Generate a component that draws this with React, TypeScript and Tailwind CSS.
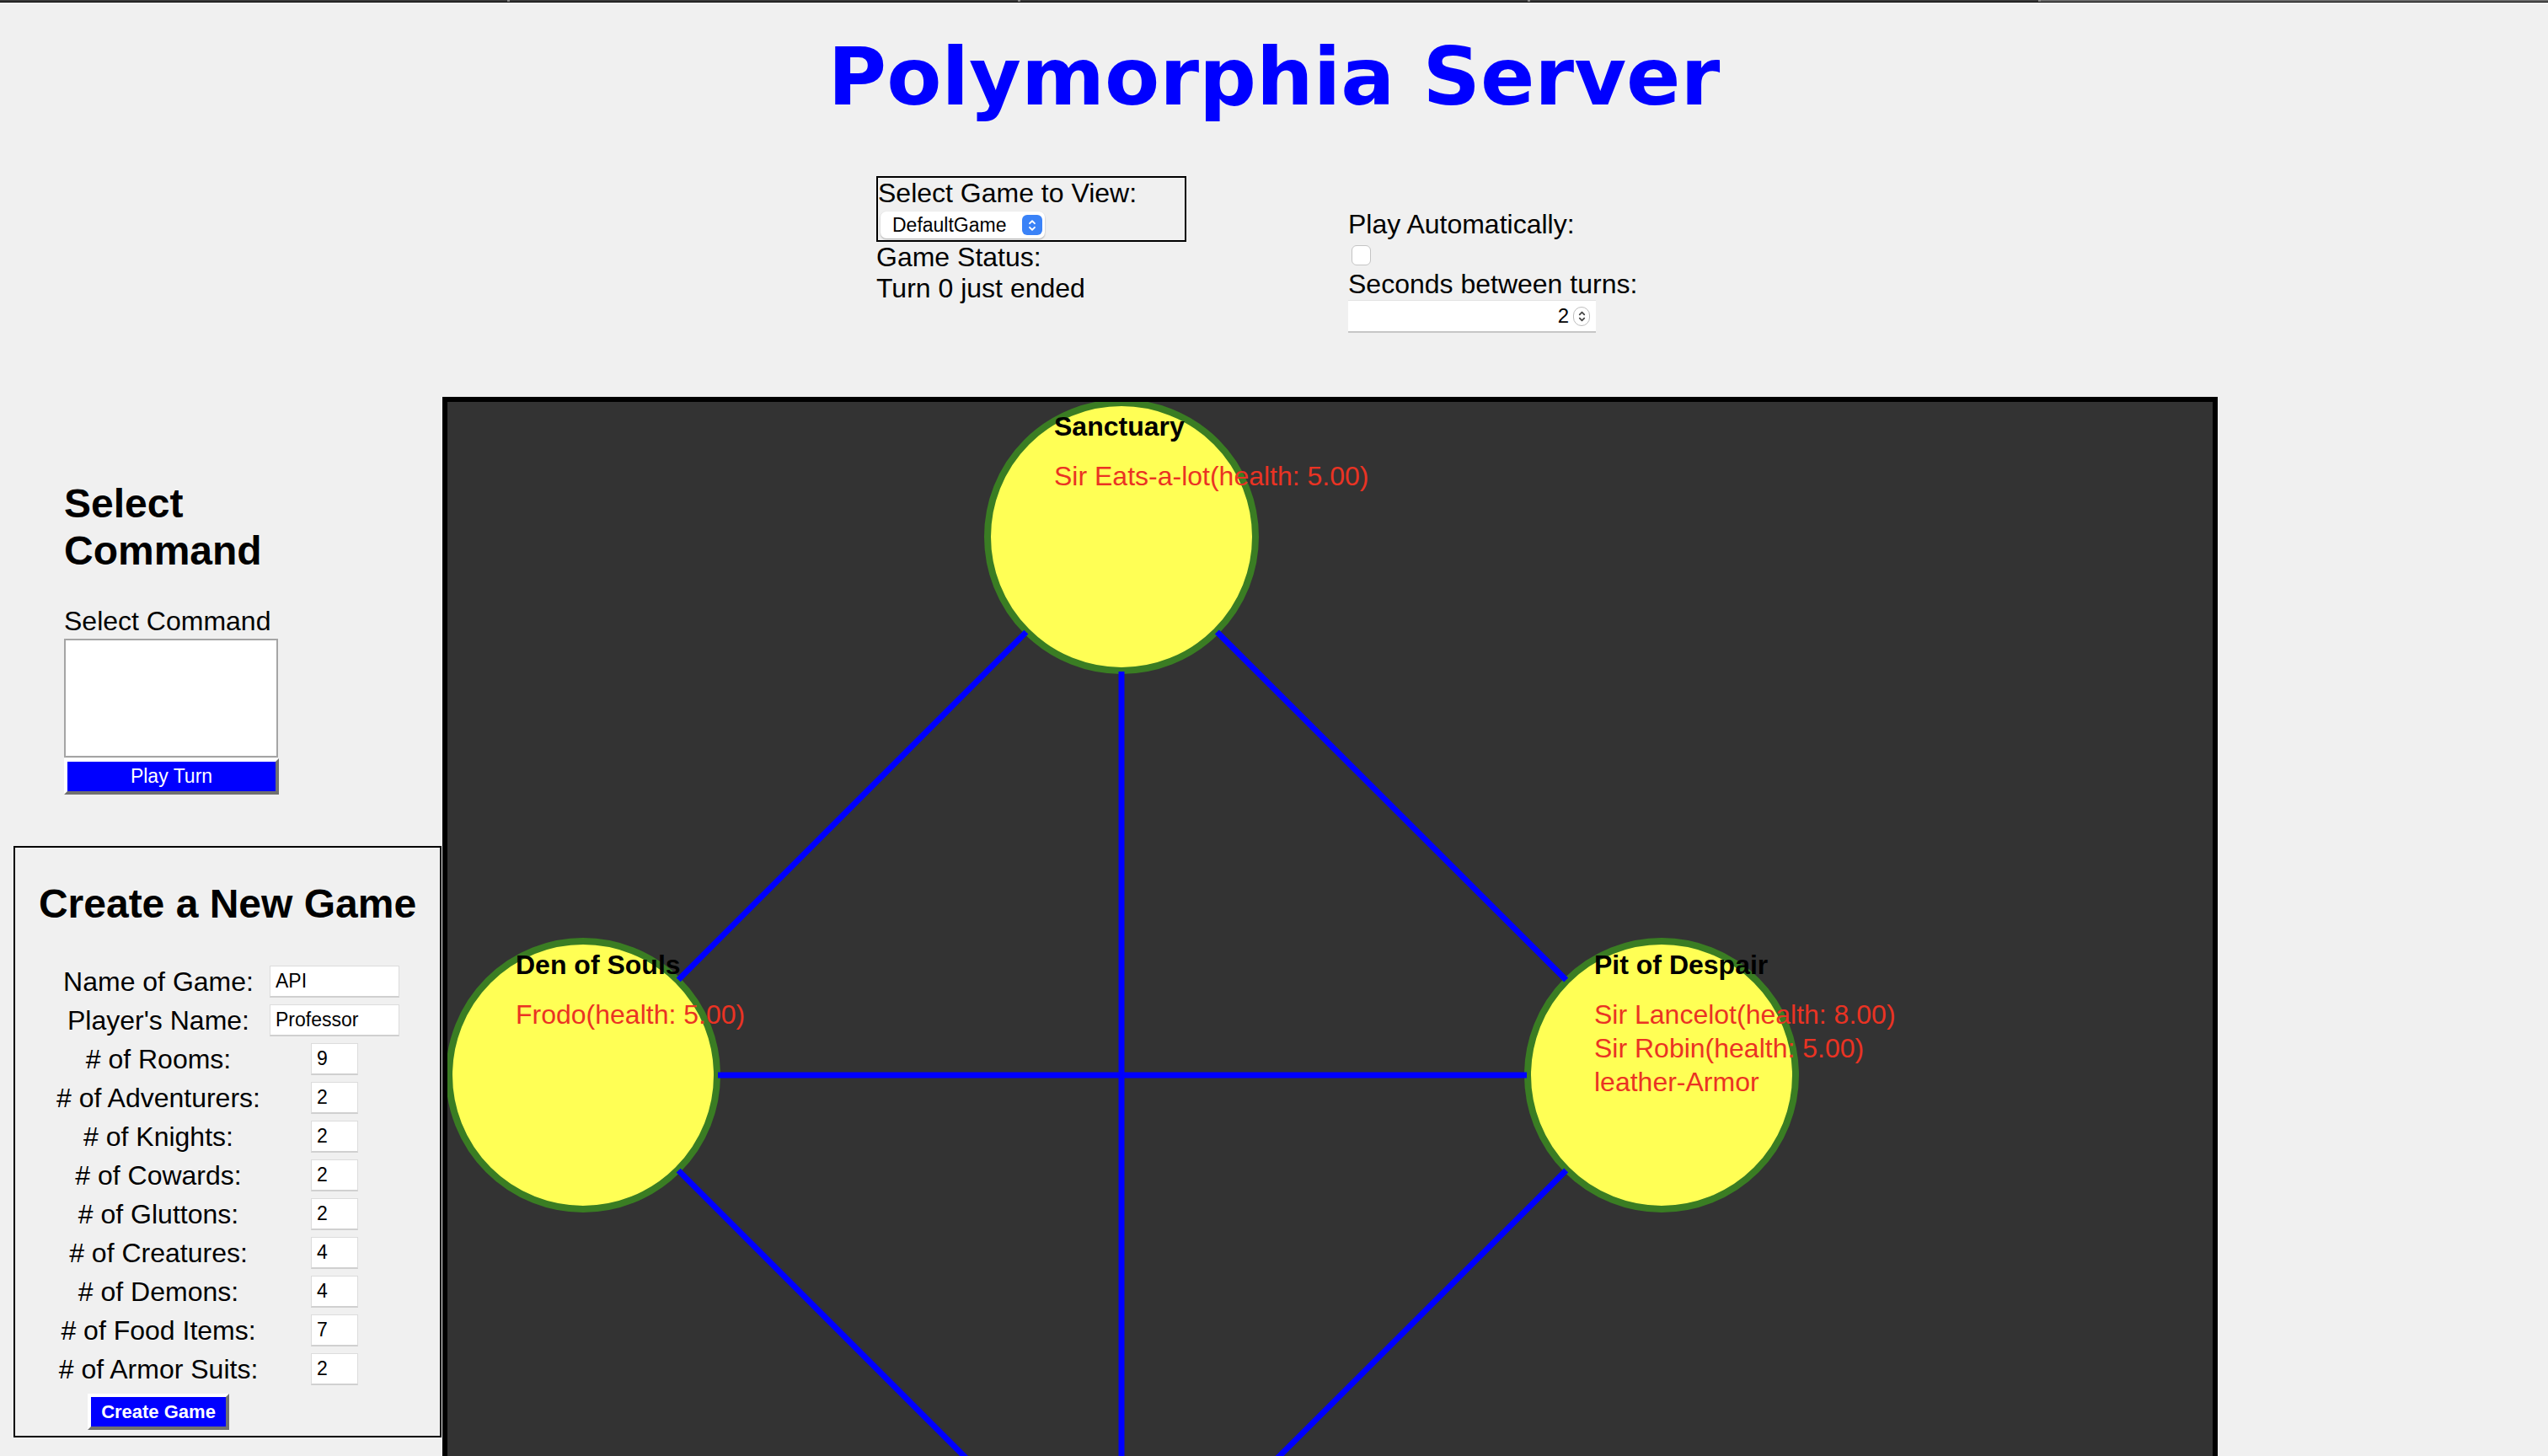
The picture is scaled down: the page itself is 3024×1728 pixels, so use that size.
import React from 'react';

type Room = { name: string; x: number; y: number; items: string[] };

// canvas coordinates (inner area of the board, 2095 wide)
const rooms: Room[] = [
  { name: 'Sanctuary', x: 800, y: 160, items: ['Sir Eats-a-lot(health: 5.00)'] },
  { name: 'Den of Souls', x: 161, y: 799, items: ['Frodo(health: 5.00)'] },
  {
    name: 'Pit of Despair',
    x: 1441,
    y: 799,
    items: ['Sir Lancelot(health: 8.00)', 'Sir Robin(health: 5.00)', 'leather-Armor'],
  },
  // the fourth room sits below the visible part of the board
  { name: '', x: 800, y: 1438, items: [] },
];

const edges: [number, number][] = [
  [0, 1],
  [0, 2],
  [0, 3],
  [1, 2],
  [1, 3],
  [2, 3],
];

const R = 159;

const formRows: { label: string; value: string; wide?: boolean }[] = [
  { label: 'Name of Game:', value: 'API', wide: true },
  { label: "Player's Name:", value: 'Professor', wide: true },
  { label: '# of Rooms:', value: '9' },
  { label: '# of Adventurers:', value: '2' },
  { label: '# of Knights:', value: '2' },
  { label: '# of Cowards:', value: '2' },
  { label: '# of Gluttons:', value: '2' },
  { label: '# of Creatures:', value: '4' },
  { label: '# of Demons:', value: '4' },
  { label: '# of Food Items:', value: '7' },
  { label: '# of Armor Suits:', value: '2' },
];

const Board: React.FC = () => {
  return (
    <svg width={2095} height={1600} viewBox="0 0 2095 1600" className="block">
      {rooms.map((r, i) => (
        <circle key={i} cx={r.x} cy={r.y} r={R} fill="#ffff55" stroke="#3a7d23" strokeWidth={8} />
      ))}
      {edges.map(([a, b]) => {
        const A = rooms[a];
        const B = rooms[b];
        const dx = B.x - A.x;
        const dy = B.y - A.y;
        const len = Math.hypot(dx, dy);
        const ux = dx / len;
        const uy = dy / len;
        return (
          <line
            key={`${a}-${b}`}
            x1={A.x + ux * 160}
            y1={A.y + uy * 160}
            x2={B.x - ux * 160}
            y2={B.y - uy * 160}
            stroke="#0000ff"
            strokeWidth={7}
          />
        );
      })}
      {rooms
        .filter((r) => r.name)
        .map((r) => (
          <g key={r.name + '-txt'} fontFamily="'Liberation Sans', Arial, sans-serif" fontSize={32}>
            <text x={r.x - 80} y={r.y - 120} fontWeight="bold" fill="#000">
              {r.name}
            </text>
            {r.items.map((it, i) => (
              <text key={it} x={r.x - 80} y={r.y - 61 + i * 40} fill="#ea3323">
                {it}
              </text>
            ))}
          </g>
        ))}
    </svg>
  );
};

const Chevrons: React.FC<{ color: string; w: number; h: number }> = ({ color, w, h }) => (
  <svg width={w} height={h} viewBox="0 0 10 16" fill="none" stroke={color} strokeWidth={1.6} strokeLinecap="round" strokeLinejoin="round">
    <path d="M2.5 6 L5 3.5 L7.5 6" />
    <path d="M2.5 10 L5 12.5 L7.5 10" />
  </svg>
);

export default function App() {
  return (
    <div className="h-[1728px] overflow-hidden bg-[#f0f0f0] font-['Liberation_Sans',Arial,sans-serif] text-[32px] leading-[37px] text-black">
      {/* browser strip */}
      <div className="flex h-[3px] bg-black">
        <div className="h-[2px] flex-1 border-r-[3px] border-[#8a8a8a] bg-[#3a3a3a]" />
        <div className="h-[2px] flex-1 border-r-[3px] border-[#8a8a8a] bg-[#3a3a3a]" />
        <div className="h-[2px] flex-1 border-r-[3px] border-[#8a8a8a] bg-[#3a3a3a]" />
        <div className="h-[2px] flex-1 border-r-[3px] border-[#8a8a8a] bg-[#3a3a3a]" />
        <div className="h-[2px] flex-1 bg-[#6a6a6a]" />
      </div>

      <h1 className="mt-[32px] text-center font-['DejaVu_Sans',Verdana,sans-serif] text-[95px] font-bold leading-[112px] text-[#0000ff]">
        Polymorphia Server
      </h1>

      {/* game controls */}
      <div className="mt-[62px] flex justify-center">
        <div className="w-[560px]">
          <div className="w-[368px] border-2 border-black">
            <div>Select Game to View:</div>
            <div className="mb-[2px] ml-[3px] mt-[3px] flex h-[32px] w-[195px] items-center justify-between rounded-[7px] bg-white pl-[14px] pr-[3px] shadow-[0_1px_2px_rgba(0,0,0,0.3)]">
              <span className="text-[23px] leading-none">DefaultGame</span>
              <span className="flex h-[24px] w-[24px] items-center justify-center rounded-[6px] bg-[#3a82f7]">
                <Chevrons color="#ffffff" w={12} h={19} />
              </span>
            </div>
          </div>
          <div>Game Status:</div>
          <div>Turn 0 just ended</div>
        </div>

        <div className="mt-[39px] w-[384px]">
          <div>Play Automatically:</div>
          <div className="ml-[4px] mt-[6px] h-[24px] w-[23px] rounded-[6px] border border-[#c4c4c4] bg-white" />
          <div className="mt-[4px]">Seconds between turns:</div>
          <div className="flex h-[39px] w-[294px] items-center justify-end gap-[5px] border-t border-b-2 border-t-[#e2e2e2] border-b-[#c6c6c6] bg-white pr-[7px]">
            <span className="text-[24px] leading-none">2</span>
            <span className="flex h-[23px] w-[20px] items-center justify-center rounded-full border border-[#bdbdbd] bg-white">
              <Chevrons color="#444444" w={11} h={19} />
            </span>
          </div>
        </div>
      </div>

      {/* main area */}
      <div className="mt-[76px] flex items-start">
        <div className="w-[525px] shrink-0">
          <div className="pl-[76px] pt-[99px]">
            <h2 className="w-[256px] text-[48px] font-bold leading-[56px]">Select Command</h2>
            <div className="mt-[37px]">Select Command</div>
            <textarea
              readOnly
              className="mt-[2px] block h-[141px] w-[254px] resize-none border-2 border-[#a5a5a5] bg-white"
            />
            <button className="mt-[1px] block h-[43px] w-[255px] border-4 border-t-white border-l-white border-r-[#707070] border-b-[#707070] bg-[#0000ff] text-[23px] leading-none text-white">
              Play Turn
            </button>
          </div>

          <div className="ml-[16px] mt-[61px] w-[508px] border-2 border-black pb-[7px] pt-[39px]">
            <h2 className="text-center text-[48px] font-bold leading-[56px]">Create a New Game</h2>
            <div className="ml-[46px] mt-[41px] grid grid-cols-[248px_170px]">
              {formRows.map((row) => (
                <React.Fragment key={row.label}>
                  <div className="flex h-[46px] items-center justify-center whitespace-nowrap">{row.label}</div>
                  <div className="flex h-[46px] items-center justify-center">
                    <input
                      readOnly
                      value={row.value}
                      className={`h-[38px] border border-[#dcdcdc] border-b-2 border-b-[#d0d0d0] bg-white pl-[6px] text-[23px] leading-none text-black outline-none ${
                        row.wide ? 'w-[154px]' : 'w-[56px]'
                      }`}
                    />
                  </div>
                </React.Fragment>
              ))}
              <div className="flex justify-center pt-[6px]">
                <button className="h-[43px] w-[168px] border-4 border-t-white border-l-white border-r-[#707070] border-b-[#707070] bg-[#0000ff] text-[22px] font-bold leading-none text-white">
                  Create Game
                </button>
              </div>
              <div />
            </div>
          </div>
        </div>

        <div className="shrink-0 border-[6px] border-black bg-[#333333]">
          <Board />
        </div>
      </div>
    </div>
  );
}
